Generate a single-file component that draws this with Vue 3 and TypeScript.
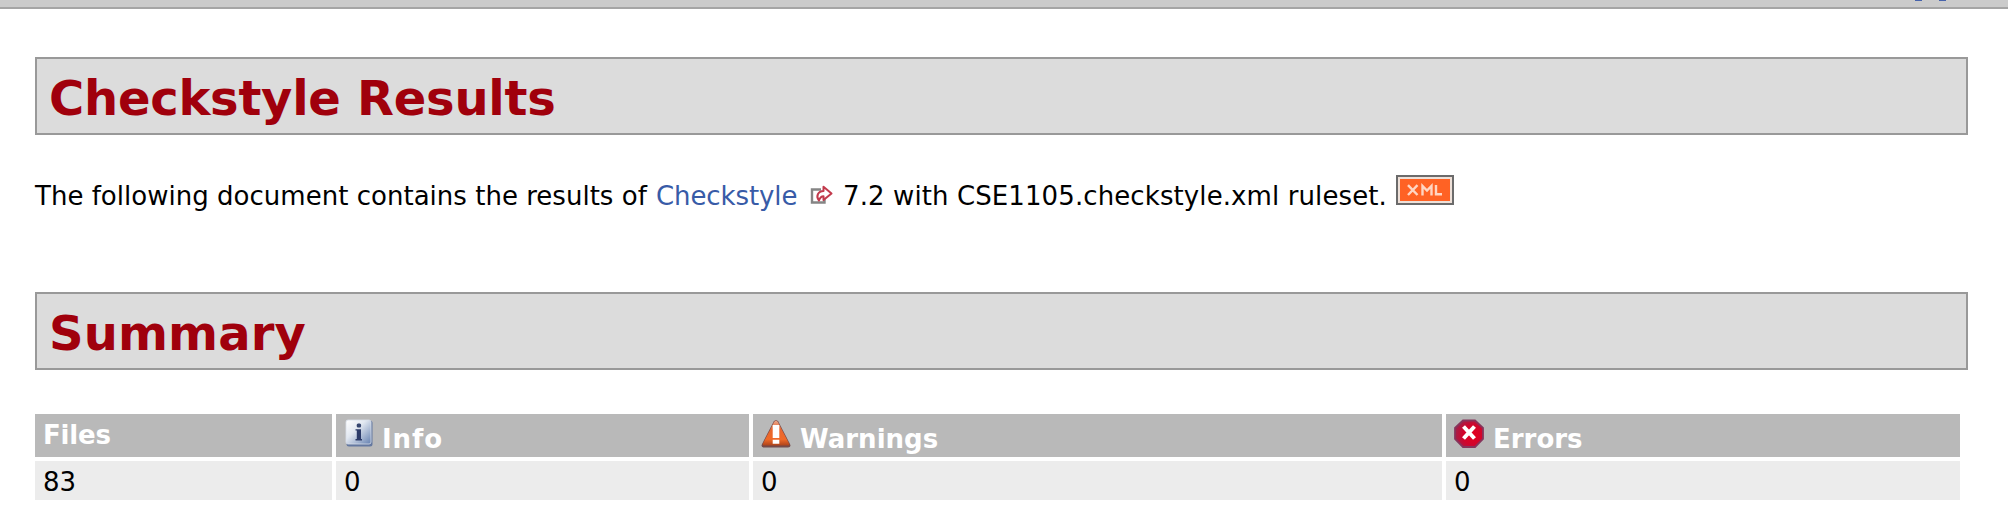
<script setup lang="ts">
interface Column {
  key: string
  label: string
  value: number
}

const columns: Column[] = [
  { key: 'files', label: 'Files', value: 83 },
  { key: 'info', label: 'Info', value: 0 },
  { key: 'warnings', label: 'Warnings', value: 0 },
  { key: 'errors', label: 'Errors', value: 0 },
]
</script>

<template>
  <div class="page">
    <div class="topbar"><i class="descender"></i><i class="descender"></i></div>
    <main class="content">
      <h2 class="heading results">Checkstyle Results</h2>
      <p class="intro">
        <span class="lead">The following document contains the results of</span>
        <a class="link">Checkstyle</a>
        <svg class="external" width="24" height="20" viewBox="0 0 24 20">
          <path d="M11 4.5H2V17.5H14.5V14" fill="none" stroke="#858585" stroke-width="2.4" />
          <path d="M9 15.5C5.5 11.5 8 6 13.5 6V1.8L21.5 8.5L13.5 15V11.3C11 11.3 10 12.5 9 15.5Z" fill="#fff" stroke="#c23a4c" stroke-width="2" stroke-linejoin="round" />
        </svg>
        <span class="tail">7.2 with CSE1105.checkstyle.xml ruleset.</span>
        <svg class="xml" width="58" height="30" viewBox="0 0 58 30">
          <rect width="58" height="30" fill="#6b6b6b" />
          <rect x="2" y="2" width="54" height="26" fill="#eee0d8" />
          <rect x="4" y="4" width="50" height="22" fill="#ff6224" />
          <g fill="none" stroke="#ffd5c2" stroke-width="2.4">
            <path d="M12 10.2L21.5 20M21.5 10.2L12 20" />
            <path d="M26.5 20.4V11L31 15.5L35.5 11V20.4" />
            <path d="M40 10V19.2H46" />
          </g>
        </svg>
      </p>
      <h2 class="heading summary">Summary</h2>
      <div class="table">
        <div v-for="col in columns" :key="col.key" class="th" :class="col.key">
          <svg v-if="col.key === 'info'" class="icon" width="30" height="30" viewBox="0 0 30 30">
            <defs>
              <linearGradient id="infoFill" x1="0" y1="0" x2="1" y2="1">
                <stop offset="0" stop-color="#fff" /><stop offset=".4" stop-color="#e2e8f1" /><stop offset="1" stop-color="#6480b0" />
              </linearGradient>
            </defs>
            <rect x="2.5" y="1.5" width="26" height="26" rx="2.5" fill="#6478a0" />
            <rect x="2" y="1" width="25" height="24" rx="2" fill="url(#infoFill)" stroke="#d8dee8" stroke-width=".8" />
            <rect x="12.7" y="4.6" width="4.4" height="4" rx="1.5" fill="#35456f" />
            <path d="M11.5 10.2H17V20H18V21.4H11.5V20H12.8V11.4H11.5Z" fill="#2c3b69" />
          </svg>
          <svg v-else-if="col.key === 'warnings'" class="icon" width="30" height="30" viewBox="0 0 30 30">
            <defs>
              <linearGradient id="warnFill" x1="0" y1="0" x2="0" y2="1">
                <stop offset="0" stop-color="#e9a68b" /><stop offset=".35" stop-color="#e8662f" /><stop offset=".75" stop-color="#f06a28" /><stop offset="1" stop-color="#ad431b" />
              </linearGradient>
            </defs>
            <path d="M12.7 2.5Q15 -.5 17.3 2.5L29 25Q30.5 28.5 27 28.5H3Q-.5 28.5 1 25Z" fill="#754a49" />
            <path d="M13 3.2Q15 0 17 3.2L28 24.5Q29 26.5 26.5 26.5H3.5Q1 26.5 2 24.5Z" fill="url(#warnFill)" />
            <path d="M11.7 6H18.3V19H11.7ZM11.7 20.7H18.3V24.7H11.7Z" fill="#fff" />
          </svg>
          <svg v-else-if="col.key === 'errors'" class="icon" width="30" height="30" viewBox="0 0 30 30">
            <defs>
              <radialGradient id="errorFill" cx=".65" cy=".55" r=".65">
                <stop offset="0" stop-color="#e4001d" /><stop offset=".6" stop-color="#cf052d" /><stop offset="1" stop-color="#a31f49" />
              </radialGradient>
            </defs>
            <path d="M9 1.5H21L29 9V20L21 28H9L1 20V9Z" fill="url(#errorFill)" stroke="#87345b" stroke-width="1.8" />
            <path d="M9.5 7.5L20.5 19.5M20.5 7.5L9.5 19.5" stroke="#fff" stroke-width="4" />
          </svg>
          <span class="label">{{ col.label }}</span>
        </div>
        <div v-for="col in columns" :key="col.key + '-value'" class="td">{{ col.value }}</div>
      </div>
    </main>
  </div>
</template>

<style>
body {
  margin: 0;
  background: #fff;
}
</style>

<style scoped>
.page {
  width: 2008px;
  height: 522px;
  overflow: hidden;
  box-sizing: border-box;
  background: #fff;
  color: #000;
  font: 26px/30px Verdana, "DejaVu Sans", sans-serif;
}
.topbar {
  display: flex;
  gap: 17px;
  height: 7px;
  padding-left: 1915px;
  background: #cbcbcb;
  border-bottom: 2px solid #a5a5a5;
}
.descender {
  width: 7px;
  height: 1px;
  background: #4763ab;
}
.content {
  padding: 48px 40px 0 35px;
}
.heading {
  box-sizing: border-box;
  height: 78px;
  margin: 0;
  padding: 0 0 0 12px;
  border: 2px solid #999;
  background: #dcdcdc;
  color: #a0000c;
  font-size: 48px;
  line-height: 78px;
  font-weight: bold;
}
.results {
  letter-spacing: -0.25px;
}
.summary {
  letter-spacing: 0.1px;
}
.intro {
  display: flex;
  height: 30px;
  margin: 0;
  padding: 45px 0 82px;
  white-space: nowrap;
}
.intro > span,
.intro > a {
  flex: none;
  line-height: 32px;
}
.lead {
  width: 621px;
  letter-spacing: 0.02px;
}
.link {
  width: 154px;
  color: #385ba7;
  letter-spacing: -0.1px;
}
.external {
  flex: none;
  width: 24px;
  margin: 5px 9px 0 0;
}
.tail {
  width: 553px;
  letter-spacing: 0.1px;
}
.xml {
  flex: none;
  margin-top: -5px;
}
.table {
  display: grid;
  grid-template-columns: 297px 413px 689px 514px;
  grid-template-rows: 43px 39px;
  gap: 4px;
  margin-top: 44px;
}
.th {
  display: flex;
  padding-left: 8px;
  background: #b9b9b9;
  color: #fff;
  font-weight: bold;
}
.icon {
  flex: none;
  margin: 5px 9px 0 0;
}
.label {
  line-height: 51px;
}
.files .label {
  line-height: 43px;
  letter-spacing: -0.2px;
}
.info .label {
  margin-left: -1px;
  letter-spacing: 0.9px;
}
.td {
  padding-left: 8px;
  background: #ececec;
  line-height: 42px;
}
</style>
